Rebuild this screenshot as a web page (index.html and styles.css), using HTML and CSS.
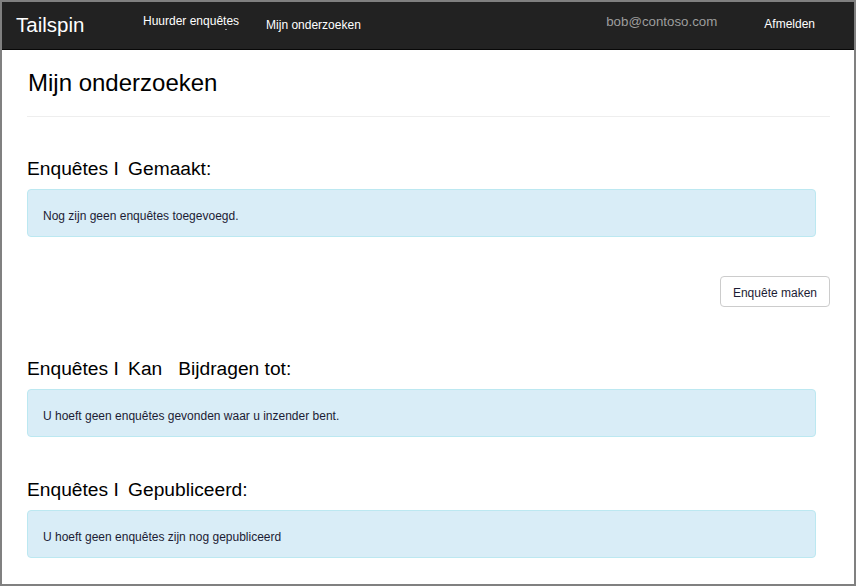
FILE: index.html
```html
<!DOCTYPE html>
<html lang="nl">
<head>
<meta charset="utf-8">
<title>Mijn onderzoeken - Tailspin</title>
<link rel="stylesheet" href="styles.css">
</head>
<body>
<div class="frame">
  <header class="navbar">
    <a class="brand" href="#">Tailspin</a>
    <nav class="nav-left">
      <a class="nav-link raised dropdown" href="#">Huurder enquêtes</a>
      <a class="nav-link" href="#">Mijn onderzoeken</a>
    </nav>
    <div class="nav-right">
      <span class="user">bob@contoso.com</span>
      <a class="nav-link logout" href="#">Afmelden</a>
    </div>
  </header>
  <main class="content">
    <h1 class="page-title">Mijn onderzoeken</h1>
    <hr class="divider">

    <h2 class="section-title first">Enquêtes I <span class="sep">Gemaakt:</span></h2>
    <div class="alert">Nog zijn geen enquêtes toegevoegd.</div>

    <div class="actions">
      <a class="btn" href="#">Enquête maken</a>
    </div>

    <h2 class="section-title after-btn">Enquêtes I <span class="sep">Kan</span>&nbsp;&nbsp; Bijdragen tot:</h2>
    <div class="alert">U hoeft geen enquêtes gevonden waar u inzender bent.</div>

    <h2 class="section-title">Enquêtes I <span class="sep">Gepubliceerd:</span></h2>
    <div class="alert">U hoeft geen enquêtes zijn nog gepubliceerd</div>
  </main>
</div>
</body>
</html>
```
FILE: styles.css
```css
* { box-sizing: border-box; }
html, body {
  margin: 0;
  padding: 0;
  background: #fff;
}
body {
  font-family: "Liberation Sans", Arial, sans-serif;
  color: #111;
}
a { text-decoration: none; }

.frame {
  width: 856px;
  height: 586px;
  border: 2px solid #808080;
  overflow: hidden;
  background: #fff;
}

/* Navbar */
.navbar {
  display: flex;
  align-items: flex-start;
  height: 48px;
  background: #222;
  border-bottom: 1px solid #080808;
  padding-left: 14px;
}
.brand {
  flex: 0 0 127px;
  margin-top: 11px;
  font-size: 20.5px;
  line-height: 24px;
  color: #fff;
}
.nav-left {
  display: flex;
  align-items: flex-start;
  gap: 27px;
}
.nav-link {
  display: block;
  font-size: 12px;
  line-height: 16px;
  color: #fff;
  margin-top: 15px;
}
.nav-link.raised { margin-top: 11px; }
.dropdown { position: relative; }
.dropdown::after {
  content: "";
  position: absolute;
  left: 82px;
  top: 16px;
  width: 2px;
  height: 1px;
  background: #9a9a9a;
}
.nav-right {
  margin-left: auto;
  display: flex;
  align-items: flex-start;
  gap: 47px;
  padding-right: 39px;
}
.user {
  display: block;
  margin-top: 12px;
  font-size: 13.3px;
  line-height: 16px;
  color: #9d9d9d;
}
.logout { margin-top: 14px; }

/* Content */
.content {
  padding: 0 24px 0 25px;
}
.page-title {
  margin: 20px 0 0;
  padding-left: 1px;
  font-size: 24px;
  line-height: 26px;
  font-weight: normal;
  color: #000;
}
.divider {
  margin: 20px 0 0;
  border: 0;
  border-top: 1px solid #eee;
  height: 0;
}
.section-title {
  margin: 42px 0 0;
  font-size: 19.2px;
  line-height: 22px;
  font-weight: normal;
  color: #000;
}
.section-title .sep { margin-left: 4px; }
.section-title.first { margin-top: 41px; }
.section-title.after-btn { margin-top: 51px; }

.alert {
  margin: 9px 14px 0 0;
  padding: 18px 15px 12px;
  background: #d9edf7;
  border: 1px solid #bce8f1;
  border-radius: 4px;
  font-size: 12px;
  line-height: 16px;
  color: #1c1c34;
}

.actions {
  display: flex;
  justify-content: flex-end;
  margin-top: 39px;
}
.btn {
  display: inline-block;
  padding: 8px 12px 4px;
  border: 1px solid #ccc;
  border-radius: 4px;
  background: #fff;
  font-size: 12px;
  line-height: 17px;
  color: #1c1c34;
}
```
